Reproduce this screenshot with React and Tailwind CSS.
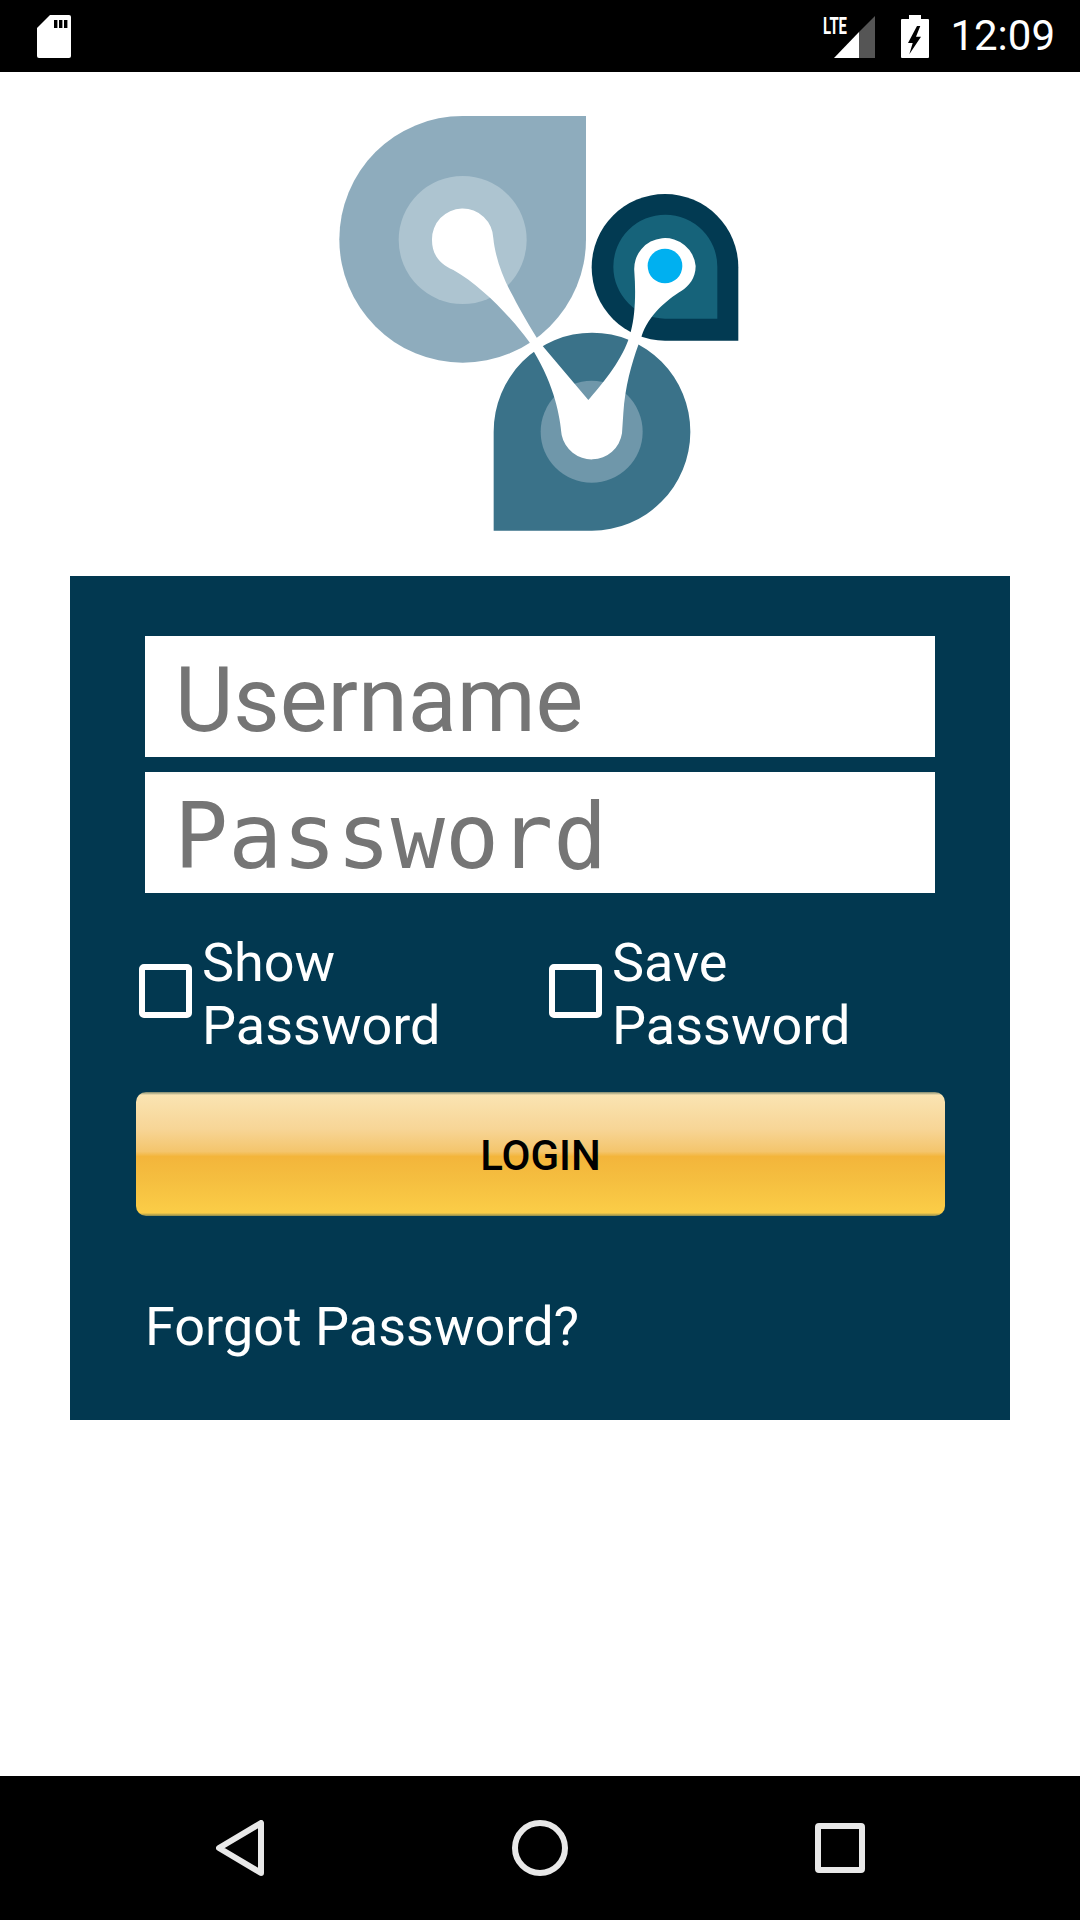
function Logo() {
  return (
    <svg viewBox="0 0 1320 1350" className="block mx-auto mt-[28px] w-[440px] h-[450px]">
      <path d="M798 48 L798 418 A370 370 0 1 1 428 48 Z" fill="#8eacbd" />
      <circle cx="428" cy="420" r="192" fill="#adc4d0" />
      <path d="M1255 722 L1035 722 A220 220 0 1 1 1255 502 Z" fill="#023a52" />
      <path d="M1192 656 L1035 656 A156 156 0 1 1 1192 500 Z" fill="#16637a" />
      <path d="M521 1292 L521 995 A295 297 0 1 1 815 1292 Z" fill="#3a7289" />
      <circle cx="815" cy="995" r="153" fill="#6f97aa" />
      <path
        fill="#ffffff"
        d="M336 420 A92 92 0 0 1 520 415 C525 470 550 540 580 590 C600 630 630 680 652 716 L668 738 L805 900 C840 860 900 790 925 720 L933 692 C945 650 948 580 943 515 A92 92 0 0 1 1127 498 C1127 535 1105 560 1085 572 C1040 600 985 645 965 708 L955 735 C935 790 915 860 910 940 L906 1000 A92 92 0 0 1 725 1005 C720 950 705 860 640 752 L634 735 C590 670 490 560 400 510 C355 490 336 460 336 420 Z"
      />
      <circle cx="1035" cy="498" r="52" fill="#00b0f0" />
    </svg>
  );
}

function Check({ label1, label2 }) {
  return (
    <div className="flex items-center w-[410px]">
      <div className="w-[53px] h-[54px] mb-[6px] border-[6px] border-white rounded-[5px] shrink-0" />
      <div className="ml-[10px] text-white text-[54px] leading-[63px] font-['Roboto',sans-serif]">
        <div>{label1}</div>
        <div>{label2}</div>
      </div>
    </div>
  );
}

export default function App() {
  return (
    <div className="w-[1080px] h-[1920px] flex flex-col bg-white overflow-hidden font-['Roboto',sans-serif]">
      <div className="h-[72px] bg-black flex items-center shrink-0 pl-[37px] pr-[25px]">
        <svg width="34" height="43" viewBox="0 0 34 43" className="block">
          <path d="M13 0 H32 Q34 0 34 2 V41 Q34 43 32 43 H2 Q0 43 0 41 V13 Z" fill="#fff" />
          <rect x="17" y="5" width="3.4" height="8" fill="#000" />
          <rect x="22" y="5" width="3.4" height="8" fill="#000" />
          <rect x="27" y="5" width="3.4" height="8" fill="#000" />
        </svg>
        <div className="ml-auto relative w-[52px] h-[43px]">
          <svg width="52" height="43" viewBox="0 0 52 43" className="block">
            <path d="M52 1 V43 H36 V17 Z" fill="#555555" />
            <path d="M36 17 V43 H11 Z" fill="#ffffff" />
          </svg>
          <span className="absolute left-0 top-[1px] w-[30px] text-white text-[24px] leading-[20px] font-bold scale-x-[0.62] origin-left whitespace-nowrap">LTE</span>
        </div>
        <svg width="28" height="43" viewBox="0 0 28 43" className="block ml-[26px]">
          <path d="M8 0 H20 V4 H27 Q28 4 28 5 V42 Q28 43 27 43 H1 Q0 43 0 42 V5 Q0 4 1 4 H8 Z" fill="#fff" />
          <path d="M16 11 L7 28 H11.7 L8.3 39.3 L20 21.7 H15 L19.3 11 Z" fill="#000" />
        </svg>
        <span className="ml-[21px] text-white text-[42px] leading-[50px]">12:09</span>
      </div>

      <div className="flex-1 min-h-0">
        <Logo />
        <div className="mt-[26px] mx-[70px] h-[844px] bg-[#023850] pt-[60px] flex flex-col">
          <div className="mx-[75px] h-[121px] bg-white flex items-center pl-[30px] pt-[8px] text-[90px] text-[#757575] font-['Roboto',sans-serif] leading-none">
            Username
          </div>
          <div className="mx-[75px] mt-[15px] h-[121px] bg-white flex items-center pl-[29px] pt-[8px] text-[90px] text-[#757575] font-['DejaVu_Sans_Mono',monospace] leading-none">
            Password
          </div>
          <div className="flex pl-[69px] mt-[38px]">
            <Check label1="Show" label2="Password" />
            <Check label1="Save" label2="Password" />
          </div>
          <div className="mx-[66px] mt-[35px] w-[809px] h-[124px] pt-[3px] rounded-[10px] flex items-center justify-center bg-[linear-gradient(to_bottom,#7f8a70_0%,#fae4b2_2.5%,#f7d596_30%,#f4c56c_48%,#f3b53b_52%,#f5bf40_72%,#fbcd47_97.5%,#8a8a50_100%)]">
            <span className="text-black text-[42px] font-medium">LOGIN</span>
          </div>
          <div className="ml-[75px] mt-[80px] text-white text-[54px] leading-[62px]">Forgot Password?</div>
        </div>
      </div>

      <div className="h-[144px] bg-black shrink-0 flex items-center">
        <div className="flex items-center justify-between w-full pl-[216px] pr-[215px]">
          <svg width="48" height="56" viewBox="0 0 48 56" className="block">
            <path d="M45 3 V53 L3 28 Z" fill="none" stroke="#e8e8e8" strokeWidth="6" strokeLinejoin="round" />
          </svg>
          <div className="w-[56px] h-[56px] rounded-full border-[6px] border-[#e8e8e8]" />
          <div className="w-[50px] h-[50px] rounded-[4px] border-[6px] border-[#e8e8e8]" />
        </div>
      </div>
    </div>
  );
}
